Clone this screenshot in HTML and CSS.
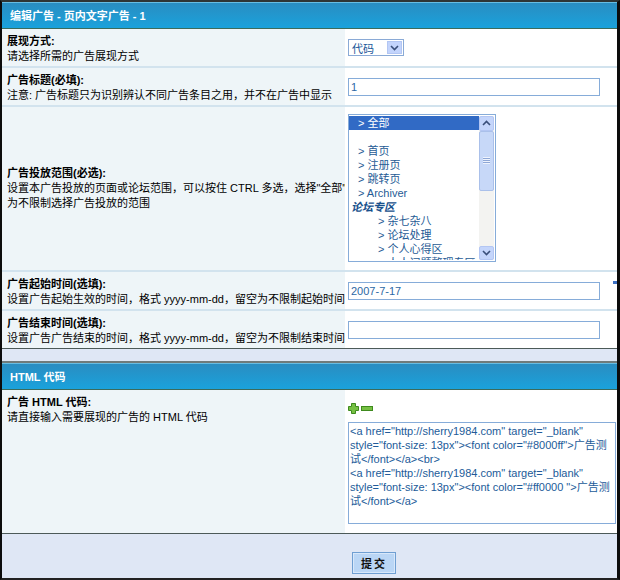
FILE: index.html
```html
<!DOCTYPE html>
<html lang="zh-CN">
<head>
<meta charset="utf-8">
<title>编辑广告</title>
<link rel="stylesheet" href="styles.css">
</head>
<body>
<div class="frame">
  <div class="hd hd-first">编辑广告 - 页内文字广告 - 1</div>

  <div class="row">
    <div class="lc"><b>展现方式:</b><br>请选择所需的广告展现方式</div>
    <div class="rc">
      <div class="dropdown">
        <span class="dd-text">代码</span>
        <span class="dd-btn"><svg width="9" height="6" viewBox="0 0 9 6"><path d="M1 1 L4.5 4.5 L8 1" fill="none" stroke="#3a4f7a" stroke-width="1.6"/></svg></span>
      </div>
    </div>
  </div>

  <div class="row">
    <div class="lc"><b>广告标题(必填):</b><br>注意: 广告标题只为识别辨认不同广告条目之用，并不在广告中显示</div>
    <div class="rc"><input class="txt" type="text" value="1"></div>
  </div>

  <div class="row row-tall">
    <div class="lc lc-mid">
      <div class="ln"><b>广告投放范围(必选):</b></div>
      <div class="ln">设置本广告投放的页面或论坛范围，可以按住 CTRL 多选，选择"全部"</div>
      <div class="ln">为不限制选择广告投放的范围</div>
    </div>
    <div class="rc rc-list">
      <div class="listbox">
        <div class="opts">
          <div class="opt sel">&gt; 全部</div>
          <div class="opt">&nbsp;</div>
          <div class="opt">&gt; 首页</div>
          <div class="opt">&gt; 注册页</div>
          <div class="opt">&gt; 跳转页</div>
          <div class="opt">&gt; Archiver</div>
          <div class="grp">论坛专区</div>
          <div class="opt sub">&gt; 杂七杂八</div>
          <div class="opt sub">&gt; 论坛处理</div>
          <div class="opt sub">&gt; 个人心得区</div>
          <div class="opt sub">&gt; 人人问题整理专区</div>
        </div>
        <div class="sbar">
          <div class="sbtn"><svg width="9" height="6" viewBox="0 0 9 6"><path d="M1 5 L4.5 1.5 L8 5" fill="none" stroke="#3a4f7a" stroke-width="1.6"/></svg></div>
          <div class="track">
            <div class="thumb"><span class="grip"></span></div>
          </div>
          <div class="sbtn"><svg width="9" height="6" viewBox="0 0 9 6"><path d="M1 1 L4.5 4.5 L8 1" fill="none" stroke="#3a4f7a" stroke-width="1.6"/></svg></div>
        </div>
      </div>
    </div>
  </div>

  <div class="row">
    <div class="lc"><b>广告起始时间(选填):</b><br>设置广告起始生效的时间，格式 yyyy-mm-dd，留空为不限制起始时间</div>
    <div class="rc"><input class="txt" type="text" value="2007-7-17"></div>
  </div>

  <div class="row row-last">
    <div class="lc"><b>广告结束时间(选填):</b><br>设置广告广告结束的时间，格式 yyyy-mm-dd，留空为不限制结束时间</div>
    <div class="rc"><input class="txt" type="text" value=""></div>
  </div>

  <div class="band"></div>

  <div class="hd hd-second">HTML 代码</div>

  <div class="row row-code">
    <div class="lc"><b>广告 HTML 代码:</b><br>请直接输入需要展现的广告的 HTML 代码</div>
    <div class="rc rc-code">
      <div class="pm">
        <svg width="11" height="11" viewBox="0 0 11 11"><path d="M3.5 0.5 H7.5 V3.5 H10.5 V7.5 H7.5 V10.5 H3.5 V7.5 H0.5 V3.5 H3.5 Z" fill="#76c043" stroke="#3e8a1e" stroke-width="1"/></svg>
        <svg width="12" height="11" viewBox="0 0 12 11"><rect x="0.5" y="3.5" width="11" height="4" fill="#76c043" stroke="#3e8a1e" stroke-width="1"/></svg>
      </div>
      <div class="code">
        <div>&lt;a href="http://sherry1984.com" target="_blank"</div>
        <div>style="font-size: 13px"&gt;&lt;font color="#8000ff"&gt;广告测</div>
        <div>试&lt;/font&gt;&lt;/a&gt;&lt;br&gt;</div>
        <div>&lt;a href="http://sherry1984.com" target="_blank"</div>
        <div>style="font-size: 13px"&gt;&lt;font color="#ff0000 "&gt;广告测</div>
        <div>试&lt;/font&gt;&lt;/a&gt;</div>
      </div>
    </div>
  </div>

  <div class="foot">
    <div></div>
    <div class="foot-rc"><button class="submit" type="button">提交</button></div>
  </div>

  <span class="dash"></span>
</div>
</body>
</html>
```

FILE: styles.css
```css
* { box-sizing: border-box; }

html, body {
  margin: 0;
  padding: 0;
  background: #ffffff;
}

body {
  font-family: "Liberation Sans", "Noto Sans CJK SC", sans-serif;
  font-size: 11px;
  color: #000;
}

.frame {
  position: relative;
  width: 620px;
  height: 580px;
  border-top: 2px solid #2e3434;
  border-left: 2px solid #0c0c0c;
  border-right: 3px solid #0c0c0c;
  border-bottom: 2px solid #222;
  background: #dfe7f5;
  overflow: hidden;
}

.hd {
  color: #fff;
  font-weight: bold;
  font-size: 11px;
  padding-left: 8px;
  display: flex;
  align-items: center;
  background: linear-gradient(#2a8cc0, #1aa2dc);
  box-shadow: inset 0 1px 0 #66bde3;
  border-bottom: 1px solid #3c6b5c;
}

.hd-first {
  height: 27px;
}

.hd-second {
  height: 29px;
  border-top: 2px solid #6f7b7b;
}

.row {
  display: grid;
  grid-template-columns: 343px 1fr;
  border-bottom: 2px solid #d2e3ee;
  background: #fff;
}

.row-last,
.row-code {
  border-bottom: 1px solid #4c5a58;
}

.lc {
  background: #eef5f8;
  padding: 5px 5px 2px 5px;
  line-height: 15px;
  white-space: nowrap;
}

.lc-mid {
  display: flex;
  flex-direction: column;
  justify-content: center;
  padding-top: 0;
  padding-bottom: 0;
}

.ln {
  line-height: 15px;
  height: 15px;
}

.rc {
  display: flex;
  align-items: center;
  padding-left: 3px;
  background: #fff;
}

.rc-list {
  padding-top: 7px;
  padding-bottom: 8px;
}

.dropdown {
  width: 56px;
  height: 17px;
  border: 1px solid #8aaad6;
  display: flex;
  align-items: center;
  justify-content: space-between;
  padding: 0 1px 0 3px;
  background: #fff;
}

.dd-text {
  color: #21589a;
  font-size: 11px;
}

.dd-btn {
  width: 15px;
  height: 13px;
  background: #c3d4fc;
  border: 1px solid #b3c6f3;
  display: flex;
  align-items: center;
  justify-content: center;
}

.txt {
  width: 252px;
  height: 18px;
  border: 1px solid #86acd9;
  padding: 0 2px;
  margin: 0;
  font-family: "Liberation Sans", "Noto Sans CJK SC", sans-serif;
  font-size: 11px;
  color: #2d67a4;
  background: #fff;
  outline: none;
}

.listbox {
  width: 148px;
  height: 148px;
  border: 1px solid #86acd9;
  padding: 1px 1px 1px 0;
  display: flex;
  background: #fff;
}

.opts {
  flex: 1;
  overflow: hidden;
  font-size: 11px;
  color: #1f5b95;
}

.opt {
  height: 14px;
  line-height: 14px;
  padding-left: 9px;
  white-space: nowrap;
}

.opt.sel {
  background: #316ac5;
  color: #fff;
}

.opt.sub {
  padding-left: 29px;
}

.grp {
  height: 14px;
  line-height: 14px;
  padding-left: 2px;
  font-weight: bold;
  font-style: italic;
  color: #17508c;
}

.sbar {
  width: 15px;
  display: flex;
  flex-direction: column;
  background: #f3f3f1;
}

.sbtn {
  height: 15px;
  background: #c4d5fb;
  border: 1px solid #b3c6f3;
  border-radius: 2px;
  display: flex;
  align-items: center;
  justify-content: center;
}

.track {
  flex: 1;
  padding-bottom: 55px;
}

.thumb {
  height: 60px;
  background: #c7d8f8;
  border: 1px solid #aac0ea;
  border-radius: 2px;
  display: flex;
  align-items: center;
  justify-content: center;
}

.grip {
  width: 7px;
  height: 7px;
  background: repeating-linear-gradient(#eef3fd 0 1px, #8ea7d6 1px 2px);
}

.band {
  height: 12px;
  background: #dfe7f5;
}

.row-code .lc {
  padding-top: 5px;
}

.rc-code {
  flex-direction: column;
  align-items: flex-start;
  padding-top: 13px;
  height: 143px;
}

.pm {
  display: flex;
  align-items: flex-start;
  gap: 2px;
  height: 10px;
  margin-bottom: 9px;
}

.pm svg {
  display: block;
}

.code {
  width: 268px;
  height: 102px;
  border: 1px solid #86acd9;
  padding: 1px 1px 0 1px;
  font-size: 11px;
  line-height: 14px;
  color: #225b99;
  white-space: nowrap;
  overflow: hidden;
  background: #fff;
}

.foot {
  display: grid;
  grid-template-columns: 343px 1fr;
  height: 44px;
  background: #dfe7f5;
}

.foot-rc {
  padding: 18px 0 0 7px;
}

.submit {
  width: 44px;
  height: 22px;
  margin: 0;
  padding: 0;
  background: #bad6f5;
  border: 1px solid #6f9fd2;
  box-shadow: inset 0 0 0 1px #d8e8fa;
  font-family: "Noto Sans CJK SC", sans-serif;
  font-size: 11px;
  font-weight: bold;
  letter-spacing: 2px;
  color: #111;
}

.dash {
  position: absolute;
  left: 611px;
  top: 279px;
  width: 5px;
  height: 3px;
  background: #3b70c4;
}
```
